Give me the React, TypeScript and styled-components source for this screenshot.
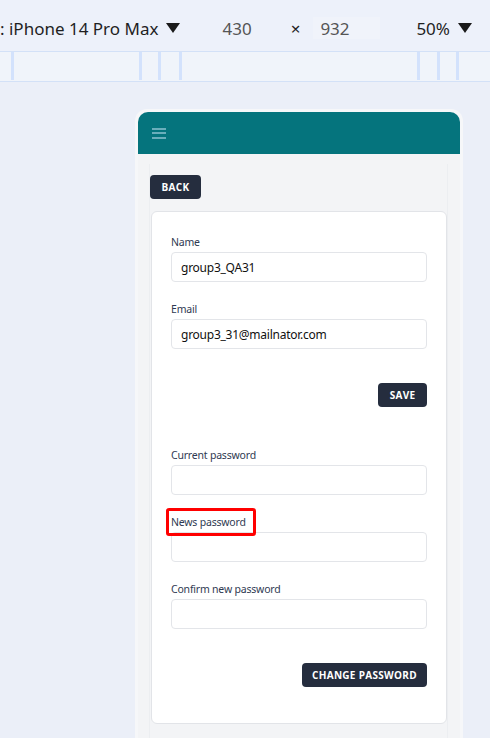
import React from "react";
import styled, { createGlobalStyle } from "styled-components";

const Global = createGlobalStyle`
  html, body { margin: 0; padding: 0; }
  body {
    background: #ebeff8;
    font-family: "Noto Sans", "Open Sans", Arial, sans-serif;
    width: 490px;
    height: 738px;
    overflow: hidden;
  }
  * { box-sizing: border-box; }
`;

const Toolbar = styled.div`
  height: 52px;
  padding-top: 5px;
  background: #edf1fa;
  display: flex;
  align-items: center;
  font-family: "Noto Sans", "Open Sans", sans-serif;
  font-size: 17px;
  color: #1f1f1f;
  border-bottom: 1px solid #d3e1f7;
  white-space: nowrap;
`;

const ToolText = styled.span<{ $ml?: number; $color?: string }>`
  margin-left: ${(p) => p.$ml ?? 0}px;
  color: ${(p) => p.$color ?? "#1f1f1f"};
  display: inline-flex;
  align-items: center;
`;

const DimBox = styled.span`
  margin-left: 13px;
  width: 67px;
  height: 22px;
  padding-left: 7px;
  display: inline-flex;
  align-items: center;
  background: #f0f3fa;
  color: #555;
`;

const Caret = styled.svg`
  margin-left: 8px;
  width: 14px;
  height: 10px;
`;

const Ruler = styled.div`
  height: 30px;
  background: #f0f4fa;
  border-bottom: 1px solid #d3e1f7;
  display: flex;
`;

const Tick = styled.div<{ $ml: number }>`
  margin-left: ${(p) => p.$ml}px;
  width: 3px;
  height: 28px;
  background: #d3e2fc;
`;

const Viewport = styled.div`
  padding-top: 27px;
  padding-left: 135px;
`;

const Frame = styled.div`
  width: 328px;
  height: 640px;
  background: #f6f7f9;
  border-radius: 12px 12px 0 0;
  padding: 3px 3px 0;
  display: flex;
  flex-direction: column;
`;

const Header = styled.header`
  height: 42px;
  flex-shrink: 0;
  background: #05747d;
  border-radius: 10px 10px 0 0;
  display: flex;
  align-items: center;
  padding-left: 14px;
`;

const Screen = styled.main`
  flex: 1;
  background: #f3f4f6;
  padding: 10px 12px 0 11px;
`;

const Container = styled.div`
  height: 100%;
  border-left: 1px solid #eceef1;
  border-right: 1px solid #eceef1;
  padding-top: 11px;
  display: flex;
  flex-direction: column;
  align-items: flex-start;
`;

const DarkButton = styled.button<{ $w: number }>`
  width: ${(p) => p.$w}px;
  height: 24px;
  border: none;
  border-radius: 4px;
  background: #252d3e;
  color: #ffffff;
  font-family: "Open Sans", "Noto Sans", sans-serif;
  font-weight: 700;
  font-size: 10px;
  letter-spacing: 0.3px;
  padding: 0;
  display: flex;
  align-items: center;
  justify-content: center;
  cursor: pointer;
`;

const Card = styled.section`
  margin-top: 12px;
  margin-left: 1px;
  width: 296px;
  background: #ffffff;
  border: 1px solid #e2e4e8;
  border-radius: 6px;
  padding: 22px 19px 36px;
  display: flex;
  flex-direction: column;
`;

const Field = styled.div<{ $mt: number }>`
  margin-top: ${(p) => p.$mt}px;
  display: flex;
  flex-direction: column;
  align-items: flex-start;
`;

const Label = styled.label<{ $highlight?: boolean }>`
  position: relative;
  font-family: "Noto Sans", "Open Sans", sans-serif;
  font-size: 10.5px;
  letter-spacing: -0.2px;
  line-height: 16px;
  color: #2f3a52;
  margin-bottom: 2px;
  ${(p) =>
    p.$highlight
      ? `&::after {
          content: "";
          position: absolute;
          left: -5px;
          right: -10px;
          top: -6px;
          bottom: -6px;
          border: 3px solid #ff0000;
          border-radius: 3px;
          pointer-events: none;
        }`
      : ""}
`;

const Input = styled.input`
  width: 256px;
  height: 30px;
  border: 1px solid #e3e5e9;
  border-radius: 4px;
  padding: 0 9px;
  font-family: "Noto Sans", "Open Sans", sans-serif;
  font-size: 12px;
  letter-spacing: -0.25px;
  color: #111;
  background: #fff;
  outline: none;
`;

const Actions = styled.div<{ $mt: number }>`
  margin-top: ${(p) => p.$mt}px;
  display: flex;
  justify-content: flex-end;
`;

const Hamburger = () => (
  <svg width="15" height="12" viewBox="0 0 15 12">
    <rect x="0" y="1" width="14" height="2" fill="#6aaebb" />
    <rect x="0" y="5" width="14" height="2" fill="#6aaebb" />
    <rect x="0" y="10" width="14" height="2" fill="#6aaebb" />
  </svg>
);

const Triangle = () => (
  <Caret viewBox="0 0 14 10">
    <polygon points="0,0 14,0 7,10" fill="#1a1a1a" />
  </Caret>
);

const ticks = [11, 125, 16, 18, 235, 17, 16];

export default function App() {
  return (
    <>
      <Global />
      <Toolbar>
        <ToolText>
          : iPhone 14 Pro Max
          <Triangle />
        </ToolText>
        <ToolText $ml={42} $color="#555">430</ToolText>
        <ToolText $ml={39} $color="#222">×</ToolText>
        <DimBox>932</DimBox>
        <ToolText $ml={36}>
          50%
          <Triangle />
        </ToolText>
      </Toolbar>
      <Ruler>
        {ticks.map((m, i) => (
          <Tick key={i} $ml={m} />
        ))}
      </Ruler>
      <Viewport>
        <Frame>
          <Header>
            <Hamburger />
          </Header>
          <Screen>
            <Container>
              <DarkButton $w={51}>BACK</DarkButton>
              <Card>
                <Field $mt={0}>
                  <Label>Name</Label>
                  <Input defaultValue="group3_QA31" />
                </Field>
                <Field $mt={19}>
                  <Label>Email</Label>
                  <Input defaultValue="group3_31@mailnator.com" />
                </Field>
                <Actions $mt={34}>
                  <DarkButton $w={49}>SAVE</DarkButton>
                </Actions>
                <Field $mt={40}>
                  <Label>Current password</Label>
                  <Input type="password" />
                </Field>
                <Field $mt={19}>
                  <Label $highlight>News password</Label>
                  <Input type="password" />
                </Field>
                <Field $mt={19}>
                  <Label>Confirm new password</Label>
                  <Input type="password" />
                </Field>
                <Actions $mt={34}>
                  <DarkButton $w={125}>CHANGE PASSWORD</DarkButton>
                </Actions>
              </Card>
            </Container>
          </Screen>
        </Frame>
      </Viewport>
    </>
  );
}
